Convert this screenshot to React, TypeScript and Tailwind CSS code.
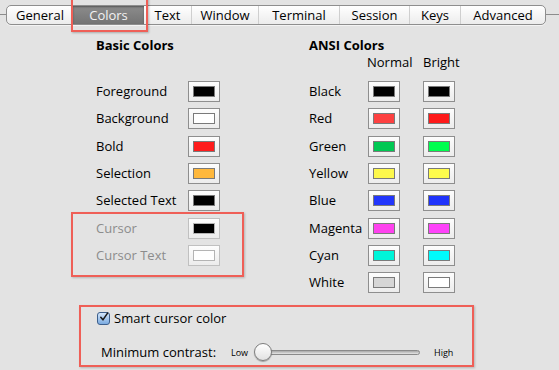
import React from 'react';

const tabs: [string, number][] = [
    ['General', 66],
    ['Colors', 71],
    ['Text', 47],
    ['Window', 67],
    ['Terminal', 81],
    ['Session', 70],
    ['Keys', 51],
    ['Advanced', 85],
];

const basic: { label: string; color: string; off?: boolean }[] = [
    { label: 'Foreground', color: '#000000' },
    { label: 'Background', color: '#ffffff' },
    { label: 'Bold', color: '#fe1c1c' },
    { label: 'Selection', color: '#ffb83c' },
    { label: 'Selected Text', color: '#000000' },
    { label: 'Cursor', color: '#000000', off: true },
    { label: 'Cursor Text', color: '#ffffff', off: true },
];

const ansi: [string, string, string][] = [
    ['Black', '#000000', '#000000'],
    ['Red', '#fd4141', '#fe1a1a'],
    ['Green', '#00c853', '#00fe4f'],
    ['Yellow', '#fdf84c', '#fefc4c'],
    ['Blue', '#2236fb', '#1f33fb'],
    ['Magenta', '#fe42ee', '#fe42fa'],
    ['Cyan', '#00f5d9', '#00fbfc'],
    ['White', '#d6d6d6', '#ffffff'],
];

const Well = ({ color, off }: { color: string; off?: boolean }) => (
    <div
        className={`w-[32px] h-[21px] flex items-center justify-center border bg-gradient-to-b from-[#fdfdfd] to-[#ececec] ${
            off ? 'border-[#c0c0c0]' : 'border-[#8e8e8e]'
        }`}
    >
        <div
            className={`w-[22px] h-[11px] border ${off ? 'border-[#b4b4b4]' : 'border-[#7a7a7a]'}`}
            style={{ backgroundColor: color }}
        />
    </div>
);

export default function App() {
    return (
        <div
            className="relative w-[559px] h-[370px] overflow-hidden bg-[#e3e3e3] text-[13px] text-black"
            style={{ fontFamily: '"Open Sans", "DejaVu Sans", sans-serif' }}
        >
            {/* tab bar */}
            <div className="relative pt-[5px] pl-[6px] h-[38px]">
                <div className="absolute left-0 right-0 top-[14px] h-px bg-[#8c8c8c]" />
                <div className="relative flex h-[20px] rounded-[5px] border border-[#8e8e8e] bg-gradient-to-b from-[#ffffff] to-[#ececec] w-max shadow-[0_1px_0_#f4f4f4]">
                    {tabs.map(([name, w], i) => {
                        const sel = name === 'Colors';
                        return (
                            <div
                                key={name}
                                className={`flex items-center justify-center leading-none ${
                                    i > 0 && !sel && tabs[i - 1][0] !== 'Colors' ? 'border-l border-[#cfcfcf]' : ''
                                } ${
                                    sel
                                        ? 'bg-gradient-to-b from-[#8c8c8c] to-[#747474] text-[#f2f2f2] shadow-[inset_0_1px_2px_#555]'
                                        : ''
                                }`}
                                style={{ width: w }}
                            >
                                {name}
                            </div>
                        );
                    })}
                </div>
                {/* highlight */}
                <div className="absolute left-[71px] top-[-3px] w-[77px] h-[35px] border-2 border-[#ef5f57] shadow-[1px_1px_2px_rgba(0,0,0,0.25)]" />
            </div>

            {/* colours */}
            <div className="flex">
                {/* basic */}
                <div className="relative pl-[96px] w-[309px]">
                    <div className="font-bold leading-[14px]">Basic Colors</div>
                    <div className="h-[26px]" />
                    {basic.map((b) => (
                        <div key={b.label} className="flex items-center h-[27.3px]">
                            <span className={`w-[92px] leading-none ${b.off ? 'text-[#8c8c8c]' : ''}`}>{b.label}</span>
                            <Well color={b.color} off={b.off} />
                        </div>
                    ))}
                    <div className="absolute left-[71px] top-[174px] w-[173px] h-[65px] border-2 border-[#ef5f57] shadow-[1px_1px_2px_rgba(0,0,0,0.2)]" />
                </div>

                {/* ansi */}
                <div>
                    <div className="font-bold leading-[14px]">ANSI Colors</div>
                    <div className="h-[26px] flex pt-[3px] leading-[14px]">
                        <span className="ml-[58px] w-[56px]">Normal</span>
                        <span>Bright</span>
                    </div>
                    {ansi.map(([n, a, b]) => (
                        <div key={n} className="flex items-center h-[27.3px]">
                            <span className="w-[59px] leading-none">{n}</span>
                            <Well color={a} />
                            <div className="w-[23px]" />
                            <Well color={b} />
                        </div>
                    ))}
                </div>
            </div>

            {/* smart cursor */}
            <div className="relative mt-[9px] ml-[79px] w-[395px] h-[62px] border-2 border-[#ef5f57] shadow-[1px_1px_2px_rgba(0,0,0,0.2)]">
                <div className="flex items-center mt-[4px] ml-[16px] h-[15px]">
                    <div className="w-[13px] h-[13px] rounded-[3px] border border-[#3d5f8c] bg-gradient-to-b from-[#d4e6fa] to-[#7aaae0] flex items-center justify-center">
                        <svg width="14" height="14" viewBox="0 0 14 14" className="-mt-[3px] ml-[1px]">
                            <path d="M2.5 7.5 L5.5 11 L12 1.5" fill="none" stroke="#1a1a1a" strokeWidth="2.2" strokeLinecap="round" strokeLinejoin="round" />
                        </svg>
                    </div>
                    <span className="ml-[4px] leading-none">Smart cursor color</span>
                </div>
                <div className="flex items-center mt-[17px] ml-[20px] h-[18px]">
                    <span className="leading-none w-[130px]">Minimum contrast:</span>
                    <span className="text-[9px] leading-none w-[23px]">Low</span>
                    <div className="relative w-[166px] h-[18px] flex items-center">
                        <div className="ml-[8px] w-[158px] h-[5px] rounded-full border border-[#8a8a8a] bg-gradient-to-b from-[#a8a8a8] to-[#e6e6e6]" />
                        <div className="absolute left-0 top-0 w-[18px] h-[18px] rounded-full border border-[#7d7d7d] bg-gradient-to-b from-[#ffffff] to-[#e2e2e2] shadow-[0_1px_1px_rgba(0,0,0,0.3)]" />
                    </div>
                    <span className="ml-[14px] text-[9px] leading-none">High</span>
                </div>
            </div>
        </div>
    );
}
